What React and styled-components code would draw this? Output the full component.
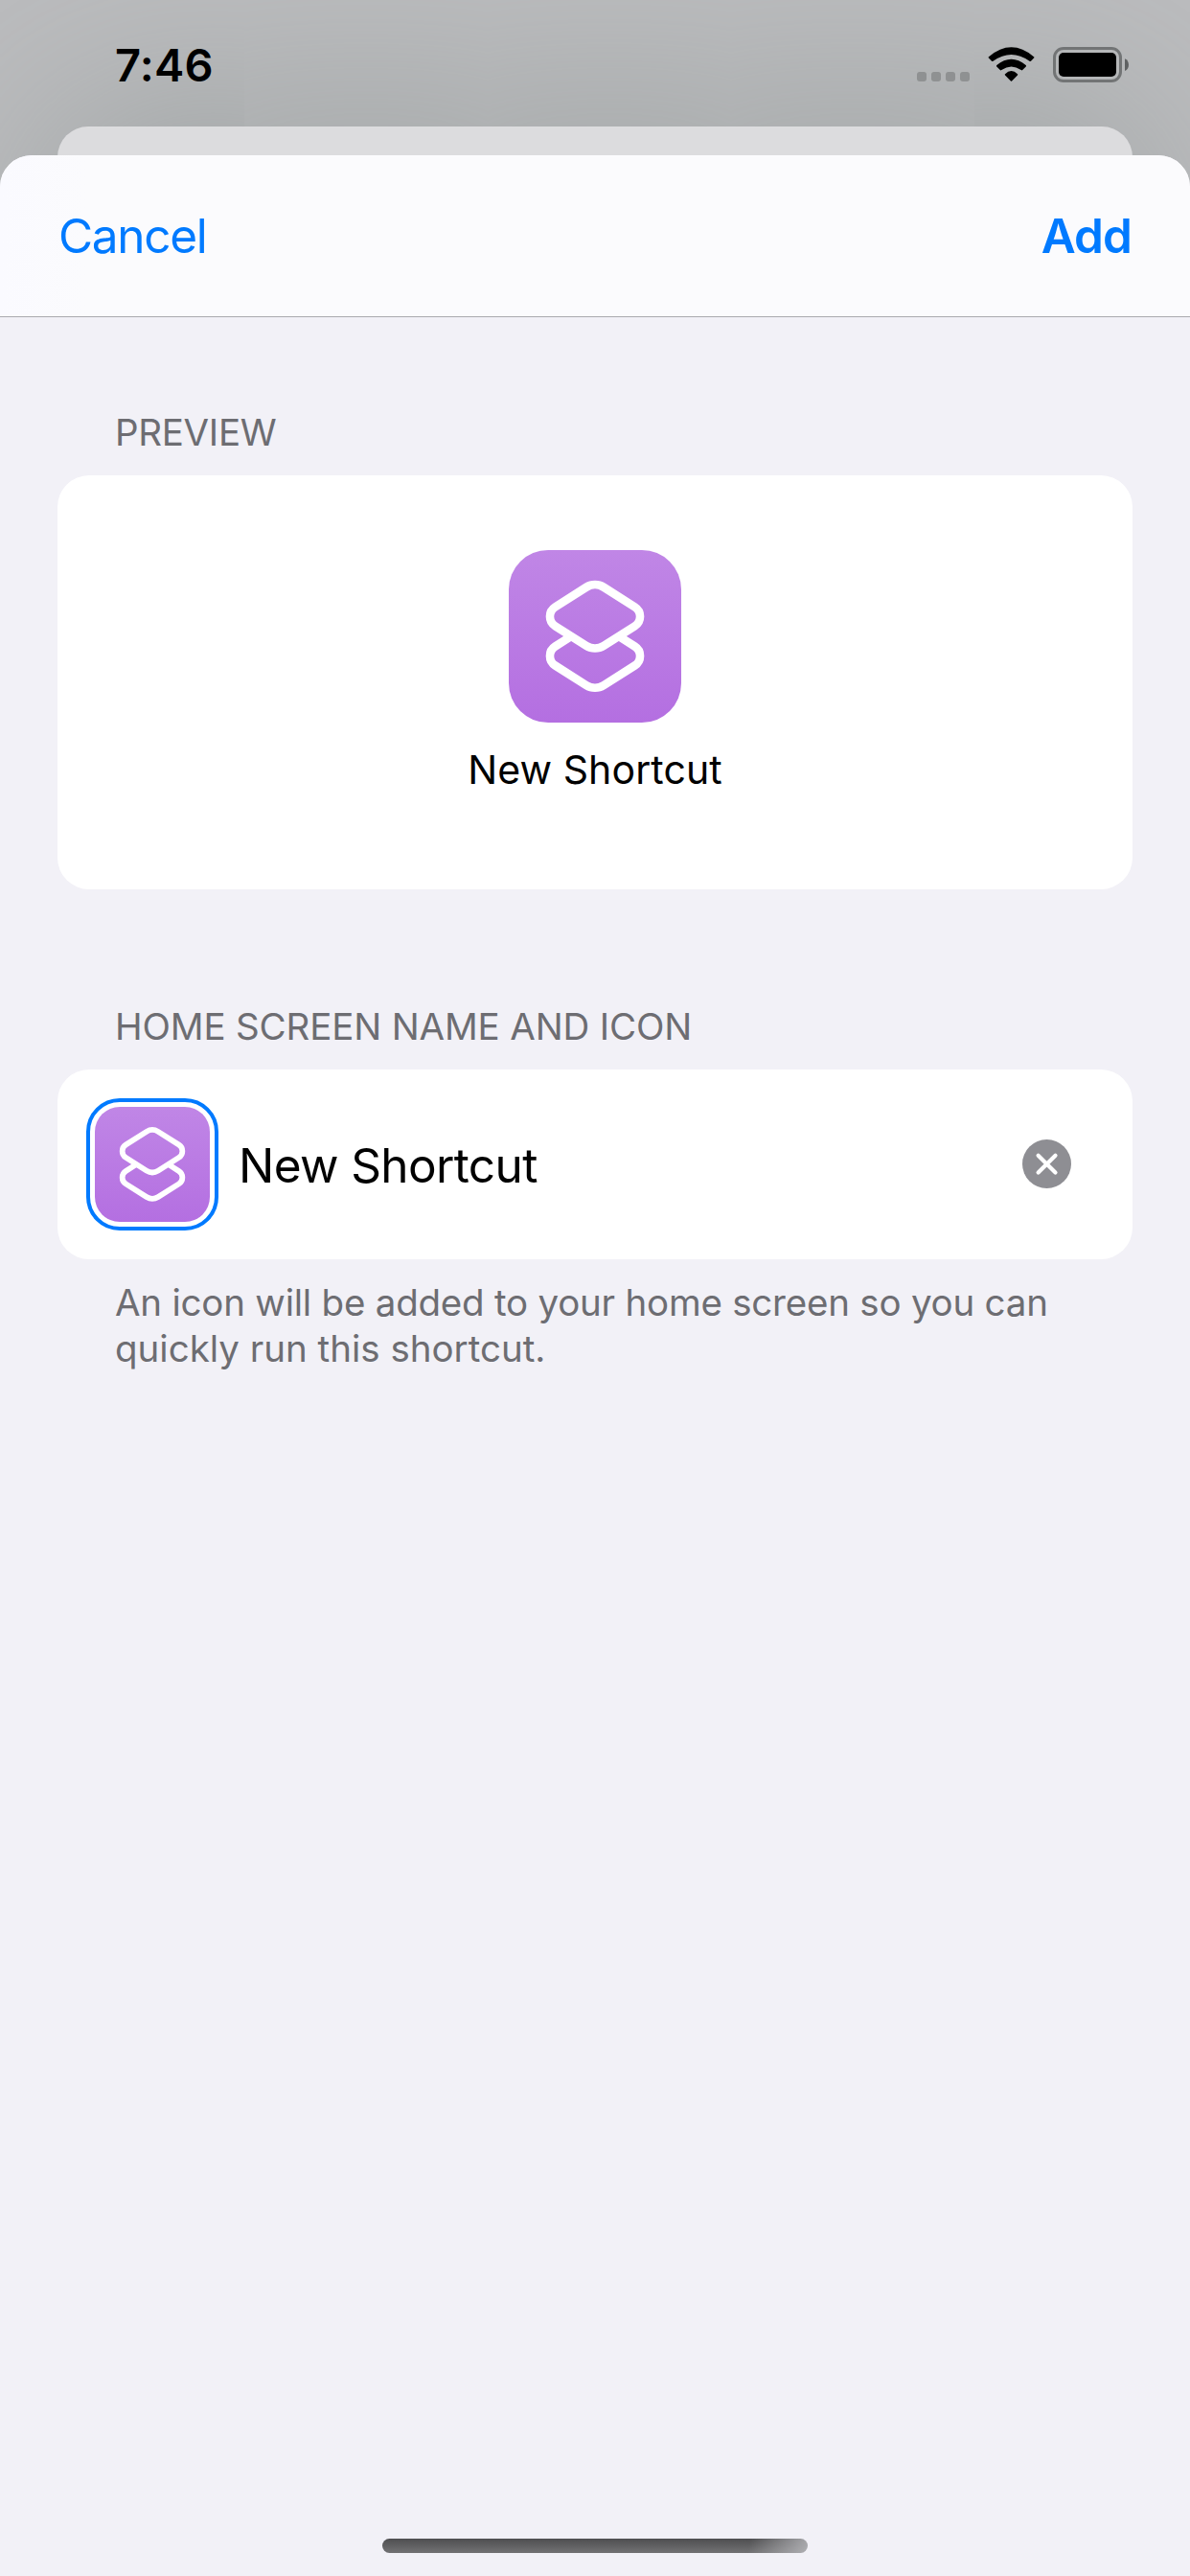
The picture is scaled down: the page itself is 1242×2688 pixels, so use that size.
import React from "react";
import styled, { createGlobalStyle } from "styled-components";

const GlobalStyle = createGlobalStyle`
  *, *::before, *::after { box-sizing: border-box; }
  body {
    margin: 0;
    font-family: Inter, "Liberation Sans", sans-serif;
    background: #f2f1f7;
  }
  button {
    padding: 0;
    border: 0;
    background: none;
    font: inherit;
  }
`;

const Screen = styled.div`
  display: flex;
  flex-direction: column;
  width: 1242px;
  height: 2688px;
  overflow: hidden;
  background: #bbbcbe;
`;

const StatusBar = styled.header`
  position: relative;
  z-index: 1;
  display: flex;
  justify-content: space-between;
  flex: none;
  height: 132px;
  padding: 38px 64px 0 120px;
`;

const Clock = styled.time`
  font-size: 47px;
  font-weight: 600;
  line-height: 60px;
  letter-spacing: 0.2px;
  color: #000;
`;

const StatusIcons = styled.div`
  display: flex;
  align-items: flex-start;
  padding-top: 11px;
`;

const SignalDots = styled.div`
  display: flex;
  gap: 5px;
  margin: 26px 19px 0 0;
`;

const SignalDot = styled.i`
  width: 10px;
  height: 10px;
  border-radius: 3px;
  background: #8f9192;
`;

const WifiIcon = styled.svg`
  display: block;
  width: 49px;
  height: 37px;
  margin-right: 19px;
`;

const BatteryIcon = styled.svg`
  display: block;
  width: 79px;
  height: 37px;
`;

const BackSheet = styled.div`
  flex: none;
  height: 500px;
  margin: 0 60px -470px;
  border-radius: 32px 32px 0 0;
  background: #dcdcde;
  box-shadow: 0 0 220px #9a9f9f;
`;

const Sheet = styled.main`
  position: relative;
  display: flex;
  flex-direction: column;
  flex: 1;
  border-radius: 33px 33px 0 0;
  overflow: hidden;
  background: #f2f1f7;
`;

const NavBar = styled.nav`
  display: flex;
  align-items: center;
  justify-content: space-between;
  flex: none;
  height: 169px;
  padding: 0 61px 0 61px;
  border-bottom: 1px solid #a9a9ae;
  background: linear-gradient(90deg, #fafaff 0, #fbfbfd 90px);
`;

const NavButton = styled.button`
  font-size: 49.5px;
  font-weight: ${(p) => (p.$strong ? 600 : 400)};
  line-height: 60px;
  letter-spacing: ${(p) => (p.$strong ? "-0.9px" : "-1.3px")};
  color: #007aff;
`;

const Content = styled.div`
  display: flex;
  flex-direction: column;
  flex: 1;
  padding: 96px 60px 0;
`;

const Section = styled.section`
  display: flex;
  flex-direction: column;
  gap: 21px;
  margin-bottom: 119px;
`;

const SectionTitle = styled.h2`
  margin: 0 60px;
  font-size: 38.5px;
  font-weight: 400;
  line-height: 48px;
  letter-spacing: ${(p) => p.$tracking};
  text-transform: uppercase;
  color: #6d6d72;
`;

const Card = styled.div`
  border-radius: 33px;
  background: #fff;
`;

const PreviewCard = styled(Card)`
  display: flex;
  flex-direction: column;
  align-items: center;
  gap: 24px;
  height: 432px;
  padding-top: 78px;
`;

const PreviewName = styled.span`
  font-size: 41px;
  line-height: 50px;
  letter-spacing: 0.1px;
  color: #000;
`;

const NameCard = styled(Card)`
  display: flex;
  align-items: center;
  height: 198px;
  padding: 0 64px 0 30px;
`;

const IconRing = styled.button`
  display: flex;
  align-items: center;
  justify-content: center;
  flex: none;
  width: 138px;
  height: 138px;
  border: 4px solid #007aff;
  border-radius: 35px;
`;

const NameField = styled.span`
  flex: 1;
  padding: 1px 0 0 21px;
  font-size: 49.5px;
  line-height: 60px;
  letter-spacing: -0.63px;
  color: #000;
`;

const ClearButton = styled.button`
  display: flex;
  margin-bottom: 1px;
`;

const Footnote = styled.p`
  display: flex;
  flex-direction: column;
  margin: 0 60px;
  font-size: 38.5px;
  line-height: 48px;
  white-space: nowrap;
  color: #6d6d72;
`;

const FootnoteLine = styled.span`
  letter-spacing: ${(p) => p.$tracking};
`;

const AppTile = styled.div`
  flex: none;
  width: ${(p) => p.$size}px;
  height: ${(p) => p.$size}px;
  border-radius: ${(p) => p.$radius}px;
  background: linear-gradient(#c086e6, #b46fe1);
`;

const TileGlyph = styled.svg`
  display: block;
  width: 100%;
  height: 100%;
`;

const HomeIndicator = styled.div`
  align-self: center;
  flex: none;
  width: 444px;
  height: 15px;
  margin-bottom: 24px;
  border-radius: 8px;
  background:
    linear-gradient(100deg, rgba(190, 190, 194, 0) 86%, rgba(190, 190, 194, 0.8) 100%),
    linear-gradient(#4e4e50, #727274);
`;

function ShortcutTile({ size, radius }) {
  return (
    <AppTile $size={size} $radius={radius}>
      <TileGlyph viewBox="0 0 180 180" fill="none" stroke="#fff" strokeWidth="8.6">
        <path d="M80.9 38.75A17 17 0 0 1 99.1 38.75L131.5 59.3A11.8 11.8 0 0 1 131.5 79.3L99.1 99.85A17 17 0 0 1 80.9 99.85L48.5 79.3A11.8 11.8 0 0 1 48.5 59.3Z" />
        <path d="M114.8 89.9L131.5 100.5A11.8 11.8 0 0 1 131.5 120.5L99.1 141.05A17 17 0 0 1 80.9 141.05L48.5 120.5A11.8 11.8 0 0 1 48.5 100.5L65.2 89.9" />
      </TileGlyph>
    </AppTile>
  );
}

export default function App() {
  return (
    <>
      <GlobalStyle />
      <Screen>
        <StatusBar>
          <Clock>7:46</Clock>
          <StatusIcons>
            <SignalDots>
              <SignalDot />
              <SignalDot />
              <SignalDot />
              <SignalDot />
            </SignalDots>
            <WifiIcon viewBox="0 0 49 37">
              <path d="M1 10.2Q24.5 -9.6 48 10.2Q48.8 10.9 48.1 11.6L45 14.8Q44.3 15.4 43.5 14.8Q24.5 1.2 5.5 14.8Q4.7 15.4 4 14.8L.9 11.6Q.2 10.9 1 10.2Z" />
              <path d="M9.3 19Q24.5 6.4 39.7 19Q40.4 19.7 39.8 20.4L36.2 24.1Q35.5 24.8 34.7 24.1Q24.5 16.9 14.3 24.1Q13.5 24.8 12.8 24.1L9.2 20.4Q8.6 19.7 9.3 19Z" />
              <path d="M18 28.3Q24.5 21.7 31 28.3Q31.6 28.9 31 29.5L25.1 35.5Q24.5 36.2 23.9 35.5L18 29.5Q17.4 28.9 18 28.3Z" />
            </WifiIcon>
            <BatteryIcon viewBox="0 0 79 37">
              <rect x="1.5" y="1.5" width="69" height="34" rx="9.5" fill="none" stroke="#727475" strokeWidth="3" />
              <rect x="6" y="6" width="60" height="25" rx="5" fill="#000" />
              <path d="M75 12.2C77.6 13.3 79 15.8 79 18.7C79 21.6 77.6 24 75 25.1Z" fill="#5f6162" />
            </BatteryIcon>
          </StatusIcons>
        </StatusBar>
        <BackSheet />
        <Sheet>
          <NavBar>
            <NavButton>Cancel</NavButton>
            <NavButton $strong>Add</NavButton>
          </NavBar>
          <Content>
            <Section>
              <SectionTitle $tracking="-0.3px">Preview</SectionTitle>
              <PreviewCard>
                <ShortcutTile size={180} radius={41} />
                <PreviewName>New Shortcut</PreviewName>
              </PreviewCard>
            </Section>
            <Section>
              <SectionTitle $tracking="-0.15px">Home Screen Name and Icon</SectionTitle>
              <NameCard>
                <IconRing aria-label="Choose icon">
                  <ShortcutTile size={120} radius={26} />
                </IconRing>
                <NameField>New Shortcut</NameField>
                <ClearButton aria-label="Clear name">
                  <svg width="51" height="51" viewBox="0 0 51 51">
                    <circle cx="25.5" cy="25.5" r="25.5" fill="#8e8e93" />
                    <path d="M16.6 16.7L34.5 34.5M34.5 16.7L16.6 34.5" stroke="#fff" strokeWidth="4.2" strokeLinecap="round" />
                  </svg>
                </ClearButton>
              </NameCard>
              <Footnote>
                <FootnoteLine $tracking="-0.22px">An icon will be added to your home screen so you can</FootnoteLine>
                <FootnoteLine $tracking="0px">quickly run this shortcut.</FootnoteLine>
              </Footnote>
            </Section>
          </Content>
          <HomeIndicator />
        </Sheet>
      </Screen>
    </>
  );
}
